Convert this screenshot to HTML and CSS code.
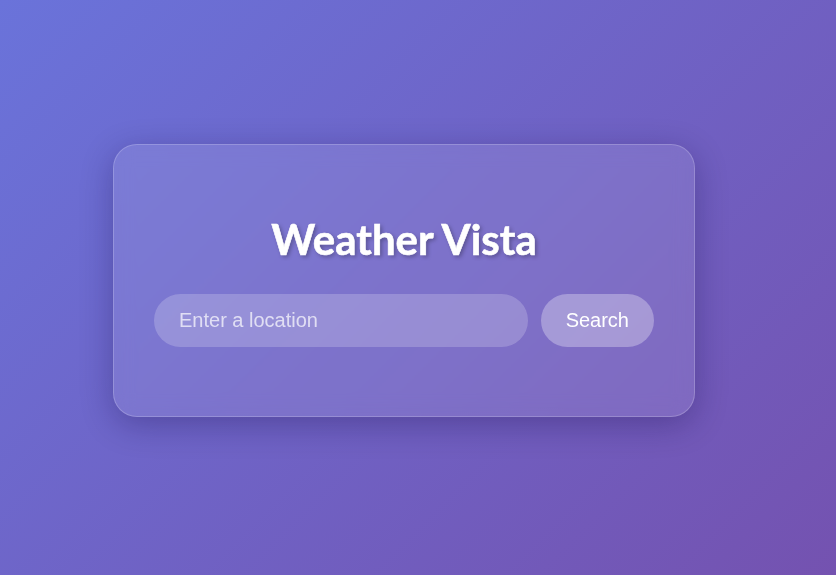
FILE: index.html
```
<!DOCTYPE html>
<html lang="en">
<head>
<meta charset="utf-8">
<title>Weather Vista</title>
<link rel="stylesheet" href="styles.css">
</head>
<body>
<main class="stage">
  <section class="card">
    <h1 class="title">Weather Vista</h1>
    <form class="search" onsubmit="return false">
      <input class="search-input" type="text" placeholder="Enter a location">
      <button class="search-btn" type="submit">Search</button>
    </form>
    <div class="weather-info"></div>
  </section>
</main>
</body>
</html>
```

FILE: styles.css
```
* { box-sizing: border-box; }
html, body { margin: 0; padding: 0; height: 100%; }
body {
  background: linear-gradient(135deg, #6a73da 0%, #7452b0 100%);
  font-family: "Lato", "Open Sans", "Liberation Sans", sans-serif;
  overflow: hidden;
}
.stage {
  height: 100%;
  display: flex;
  align-items: center;
  justify-content: center;
  padding: 0 28px 14px 0;
}
.card {
  width: 582px;
  padding: 40px 40px 69px;
  background: rgba(255, 255, 255, 0.1);
  border: 1px solid rgba(255, 255, 255, 0.2);
  border-radius: 24px;
  box-shadow: 0 8px 32px rgba(20, 10, 70, 0.3);
  backdrop-filter: blur(10px);
}
.title {
  margin: 28px 0 28px;
  text-align: center;
  color: #fff;
  font-size: 42px;
  line-height: 53px;
  font-weight: 700;
  -webkit-text-stroke: 0.6px #fff;
  text-shadow: 2px 2px 4px rgba(0, 0, 0, 0.3);
}
.search {
  display: flex;
  gap: 13px;
  margin: 0;
}
.search-input {
  flex: 1;
  min-width: 0;
  padding: 15px 25px;
  border: none;
  border-radius: 50px;
  background: rgba(255, 255, 255, 0.2);
  color: #fff;
  font-family: "Liberation Sans", Arial, sans-serif;
  font-size: 20px;
  line-height: 23px;
  outline: none;
}
.search-input::placeholder { color: rgba(255, 255, 255, 0.7); }
.search-btn {
  padding: 15px 25px;
  border: none;
  border-radius: 50px;
  background: rgba(255, 255, 255, 0.3);
  color: #fff;
  font-family: "Liberation Sans", Arial, sans-serif;
  font-size: 20px;
  line-height: 23px;
  cursor: pointer;
}
.weather-info { height: 0; }
```
